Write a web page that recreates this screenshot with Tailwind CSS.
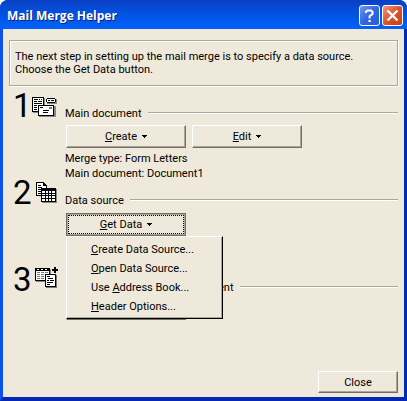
<!DOCTYPE html>
<html lang="en">
<head>
    <meta charset="UTF-8">
    <meta name="viewport" content="width=device-width, initial-scale=1.0">
    <title>Mail Merge Helper</title>
    <!-- Tailwind CSS CDN -->
    <script src="https://cdn.jsdelivr.net/npm/@tailwindcss/browser@4"></script>
</head>
<body class="min-h-screen bg-white flex flex-col font-['Roboto',sans-serif] text-[11px] leading-[15px] text-black">
    <div class="grow flex flex-col rounded-t-lg overflow-hidden bg-[#0846e0]">

        <!-- Title bar -->
        <header class="h-[29px] flex items-center gap-[2px] pl-[7px] pr-1 pt-[2px] bg-linear-to-b from-[#0a3fc4] via-[#0054e3] to-[#0262fb]">
            <h1 class="grow font-['Open_Sans',sans-serif] text-[12px] leading-5 font-bold text-white [text-shadow:1px_1px_0_#0a1f7c]">Mail Merge Helper</h1>
            <button type="button" aria-label="Help" class="size-[21px] rounded-[3px] border border-white bg-linear-to-br from-[#6f96f2] via-[#3366e0] to-[#2a5ce0] flex items-center justify-center">
                <svg class="size-[15px]" viewBox="0 0 15 15" fill="none" stroke="#fff" stroke-width="2"><path d="M4 5V3.8L5.5 2.5h3.5l1.6 1.4v2L7.6 8.2v2.2M6.5 13h2.2"/></svg>
            </button>
            <button type="button" aria-label="Close window" class="size-[21px] rounded-[3px] border border-white bg-linear-to-br from-[#ee9478] via-[#e0502a] to-[#cc3d10] flex items-center justify-center">
                <svg class="size-[15px]" viewBox="0 0 15 15" fill="none" stroke="#fff" stroke-width="2.4"><path d="M2.5 2.5l10 10M12.5 2.5l-10 10"/></svg>
            </button>
        </header>

        <!-- Window frame and dialog body -->
        <div class="grow flex flex-col border-l-3 border-r-3 border-b-4 border-l-[#0b51ea] border-r-[#0428b4] border-b-[#0428b4]">
            <main class="grow flex flex-col bg-[#eee9db] pl-[6px] pr-[6px] pt-[11px] pb-1">
                <p class="border border-[#aca899] shadow-[1px_1px_0_#fff,inset_1px_1px_0_#fff] pl-[5px] pr-2 pt-[9px] pb-2 h-[46px] leading-[13px]">The next step in setting up the mail merge is to specify a data source.<br>Choose the Get Data button.</p>

                <!-- Step 1 -->
                <section class="mt-[6px] h-[87px] flex">
                    <div class="w-[22px] shrink-0 pl-1 text-[33px] leading-7">1</div>
                    <svg class="w-7 h-[25px] mt-px mr-[6px] shrink-0" viewBox="0 0 28 25" shape-rendering="crispEdges">
                        <path fill="#8a8a84" d="M2 5h12v15H2zM16 6h10v5H16zM8 13h17v11H8z"/>
                        <path d="M1 4h12v15H1zM16 5h8v1h1v3h-1v1h-8V9h-1V6h1zM7 12h16v11H7z"/>
                        <path fill="#fff" d="M2 5h10v13H2zM16 6h8v3h-8zM8 13h14v9H8z"/>
                        <path d="M3 6h4v1H3zM8 6h1v1H8zM10 6h1v1h-1zM3 8h3v1H3zM7 8h4v1H7zM3 10h8v1H3zM3 12h3v1H3zM3 14h3v1H3zM3 16h3v1H3zM17 7h2v1h-2zM20 7h3v1h-3zM7 12h6v1H7zM7 12h1v7H7zM9 14h3v1H9zM12 17h6v1h-6zM12 19h5v1h-5z"/>
                        <path fill="#777" d="M18 14h3v2h-3z"/>
                    </svg>
                    <div class="grow pt-[13px]">
                        <div class="flex items-center gap-[6px] h-4">
                            <h2>Main document</h2>
                            <div class="grow h-[2px] bg-[#aca899] border-b border-white"></div>
                        </div>
                        <div class="flex gap-[6px] mt-1 pl-px">
                            <button type="button" class="w-[120px] h-[23px] border border-t-white border-l-white border-r-[#716f64] border-b-[#716f64] shadow-[inset_-1px_-1px_0_#aca899] flex items-center justify-center gap-[5px]"><span><u>C</u>reate</span><svg class="w-[5px] h-[3px]" viewBox="0 0 5 3" shape-rendering="crispEdges"><path d="M0 0h5v1H4v1H3v1H2V2H1V1H0z"/></svg></button>
                            <button type="button" class="w-[110px] h-[23px] border border-t-white border-l-white border-r-[#716f64] border-b-[#716f64] shadow-[inset_-1px_-1px_0_#aca899] flex items-center justify-center gap-[5px]"><span><u>E</u>dit</span><svg class="w-[5px] h-[3px]" viewBox="0 0 5 3" shape-rendering="crispEdges"><path d="M0 0h5v1H4v1H3v1H2V2H1V1H0z"/></svg></button>
                        </div>
                        <p class="mt-[3px]">Merge type: Form Letters</p>
                        <p>Main document: Document1</p>
                    </div>
                </section>

                <!-- Step 2 -->
                <section class="h-[87px] flex">
                    <div class="w-[22px] shrink-0 pl-1 text-[33px] leading-7">2</div>
                    <svg class="w-7 h-[25px] mt-px mr-[6px] shrink-0" viewBox="0 0 28 25" shape-rendering="crispEdges">
                        <path fill="#8a8a84" d="M11 9h15v14H11z"/>
                        <path d="M5 2h8v1h1v1h1v1h1v11H5z"/>
                        <path fill="#fff" d="M6 3h6v3h3v9H6z"/>
                        <path d="M7 5h3v1H7zM7 7h4v1H7zM7 9h3v1H7zM7 11h3v1H7zM7 13h3v1H7zM10 8h15v14H10z"/>
                        <path fill="#fff" d="M11 11h3v2h-3zM15 11h2v2h-2zM18 11h2v2h-2zM21 11h3v2h-3zM11 14h3v1h-3zM15 14h2v1h-2zM18 14h2v1h-2zM21 14h3v1h-3zM11 16h3v2h-3zM15 16h2v2h-2zM18 16h2v2h-2zM21 16h3v2h-3zM11 19h3v2h-3zM15 19h2v2h-2zM18 19h2v2h-2zM21 19h3v2h-3z"/>
                    </svg>
                    <div class="grow pt-[13px]">
                        <div class="flex items-center gap-[6px] h-4">
                            <h2>Data source</h2>
                            <div class="grow h-[2px] bg-[#aca899] border-b border-white"></div>
                        </div>
                        <div class="relative mt-[5px] ml-px w-[120px]">
                            <button type="button" aria-haspopup="menu" aria-expanded="true" class="w-full h-[23px] border border-[#716f64] bg-[#aca899] p-px flex">
                                <span class="grow h-[19px] border border-dotted border-black bg-[#eee9db] flex items-center justify-center gap-[5px]"><span><u>G</u>et Data</span><svg class="w-[5px] h-[3px]" viewBox="0 0 5 3" shape-rendering="crispEdges"><path d="M0 0h5v1H4v1H3v1H2V2H1V1H0z"/></svg></span>
                            </button>
                            <!-- Get Data menu -->
                            <ul role="menu" class="absolute left-0 top-full z-10 w-[157px] bg-[#eee9db] border border-t-white border-l-white border-r-black border-b-black shadow-[inset_-1px_-1px_0_#aca899] pt-[3px] pb-[2px]">
                                <li><button type="button" role="menuitem" class="block w-full h-[19px] pl-6 text-left"><u>C</u>reate Data Source...</button></li>
                                <li><button type="button" role="menuitem" class="block w-full h-[19px] pl-6 text-left"><u>O</u>pen Data Source...</button></li>
                                <li><button type="button" role="menuitem" class="block w-full h-[19px] pl-6 text-left">Use <u>A</u>ddress Book...</button></li>
                                <li><button type="button" role="menuitem" class="block w-full h-[19px] pl-6 text-left"><u>H</u>eader Options...</button></li>
                            </ul>
                        </div>
                    </div>
                </section>

                <!-- Step 3 -->
                <section class="flex">
                    <div class="w-[22px] shrink-0 pl-1 text-[33px] leading-7">3</div>
                    <svg class="w-7 h-[25px] mt-px mr-[6px] shrink-0" viewBox="0 0 28 25" shape-rendering="crispEdges">
                        <path fill="#8a8a84" d="M5 2h15v13H5z"/>
                        <path d="M4 1h15v13H4z"/>
                        <path fill="#fff" d="M5 4h13v9H5zM6 2h2v1H6zM10 2h2v1h-2zM14 2h2v1h-2z"/>
                        <path fill="#777" d="M6 5h3v1H6zM10 5h3v1h-3zM14 5h3v1h-3zM6 7h3v1H6zM10 7h3v1h-3zM6 9h3v1H6zM10 9h3v1h-3zM6 11h3v1H6zM10 11h3v1h-3zM15 8h11v13H15z"/>
                        <path d="M14 7h11v13H14zM23 0h2v2h2v2h-2v2h-2V4h-2V2h2z"/>
                        <path fill="#fff" d="M15 8h9v11h-9z"/>
                        <path d="M16 9h3v1h-3zM17 11h5v1h-5zM16 13h2v1h-2zM19 13h4v1h-4zM16 15h6v1h-6zM16 17h3v1h-3z"/>
                    </svg>
                    <div class="grow pt-[13px] pl-px">
                        <div class="flex items-center gap-[6px] h-4">
                            <h2>Merge the data with the document</h2>
                            <div class="grow h-[2px] bg-[#aca899] border-b border-white"></div>
                        </div>
                        <button type="button" aria-label="Merge" class="mt-[2px] w-[120px] h-[23px] border border-t-white border-l-white border-r-[#716f64] border-b-[#716f64] shadow-[inset_-1px_-1px_0_#aca899]"></button>
                    </div>
                </section>

                <footer class="mt-auto flex justify-end">
                    <button type="button" class="w-20 h-[22px] border border-t-white border-l-white border-r-[#716f64] border-b-[#716f64] shadow-[inset_-1px_-1px_0_#aca899]">Close</button>
                </footer>
            </main>
        </div>
    </div>
</body>
</html>
